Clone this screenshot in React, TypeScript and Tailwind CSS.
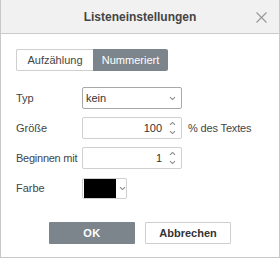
import React from "react";

const Chevron = ({ className = "" }: { className?: string }) => (
  <svg width="7" height="5" viewBox="0 0 7 5" className={className}>
    <path d="M1 1.2 L3.5 3.6 L6 1.2" fill="none" stroke="#888" strokeWidth="1.1" />
  </svg>
);

const Spinner = () => (
  <div className="flex flex-col items-center gap-[4px] mr-[5px]">
    <svg width="7" height="5" viewBox="0 0 7 5">
      <path d="M1 3.8 L3.5 1.4 L6 3.8" fill="none" stroke="#888" strokeWidth="1.1" />
    </svg>
    <svg width="7" height="5" viewBox="0 0 7 5">
      <path d="M1 1.2 L3.5 3.6 L6 1.2" fill="none" stroke="#888" strokeWidth="1.1" />
    </svg>
  </div>
);

export default function App() {
  return (
    <div
      className="w-[280px] h-[258px] bg-white border-x border-b border-[#c8c8c8] flex flex-col text-[#444]"
      style={{ fontFamily: '"Liberation Sans", Arial, sans-serif' }}
    >
      <div className="h-[34px] shrink-0 bg-[#f1f1f1] border-b border-[#cbcbcb] relative flex items-center justify-center">
        <span className="text-[12px] font-bold text-[#444]">Listeneinstellungen</span>
        <svg
          width="11"
          height="11"
          viewBox="0 0 11 11"
          className="absolute left-[255px] top-[12px]"
        >
          <path d="M0.5 0.5 L10.5 10.5 M10.5 0.5 L0.5 10.5" stroke="#9a9a9a" strokeWidth="1.2" />
        </svg>
      </div>

      <div className="flex flex-col pl-[15px] pt-[15px]">
        <div className="flex h-[22px] text-[11px]">
          <div className="w-[77px] border border-[#cfcfcf] border-r-0 rounded-l-[2px] flex items-center justify-center text-[#444]">
            Aufzählung
          </div>
          <div className="w-[75px] bg-[#7d858c] rounded-r-[2px] flex items-center justify-center text-white">
            Nummeriert
          </div>
        </div>

        <div className="mt-[16px] flex flex-col gap-[8px] text-[11px]">
          <div className="flex items-center h-[22px]">
            <div className="w-[66px]">Typ</div>
            <div className="w-[100px] h-[22px] border border-[#a8a8a8] rounded-[2px] flex items-center justify-between pl-[3px] pr-[5px] text-[#333]">
              <span>kein</span>
              <Chevron />
            </div>
          </div>
          <div className="flex items-center h-[22px]">
            <div className="w-[66px]">Größe</div>
            <div className="w-[100px] h-[22px] border border-[#cfcfcf] rounded-[2px] flex items-center justify-end text-[#333]">
              <span className="mr-[7px]">100</span>
              <Spinner />
            </div>
            <span className="ml-[6px] tracking-[-0.15px]">% des Textes</span>
          </div>
          <div className="flex items-center h-[22px]">
            <div className="w-[66px] tracking-[-0.25px]">Beginnen mit</div>
            <div className="w-[100px] h-[22px] border border-[#cfcfcf] rounded-[2px] flex items-center justify-end text-[#333]">
              <span className="mr-[7px]">1</span>
              <Spinner />
            </div>
          </div>
          <div className="flex items-center h-[22px]">
            <div className="w-[66px]">Farbe</div>
            <div className="w-[45px] h-[21px] border border-[#cfcfcf] rounded-[2px] flex items-center pl-[1px]">
              <div className="w-[32px] h-[19px] bg-black" />
              <Chevron className="ml-[3px]" />
            </div>
          </div>
        </div>
      </div>

      <div className="mt-[23px] flex justify-center gap-[10px] text-[11px] font-bold">
        <div className="w-[86px] h-[22px] bg-[#7d858c] text-white rounded-[1px] flex items-center justify-center tracking-[0.5px]">
          OK
        </div>
        <div className="w-[86px] h-[22px] border border-[#cfcfcf] rounded-[1px] flex items-center justify-center text-[#333]">
          Abbrechen
        </div>
      </div>
    </div>
  );
}
